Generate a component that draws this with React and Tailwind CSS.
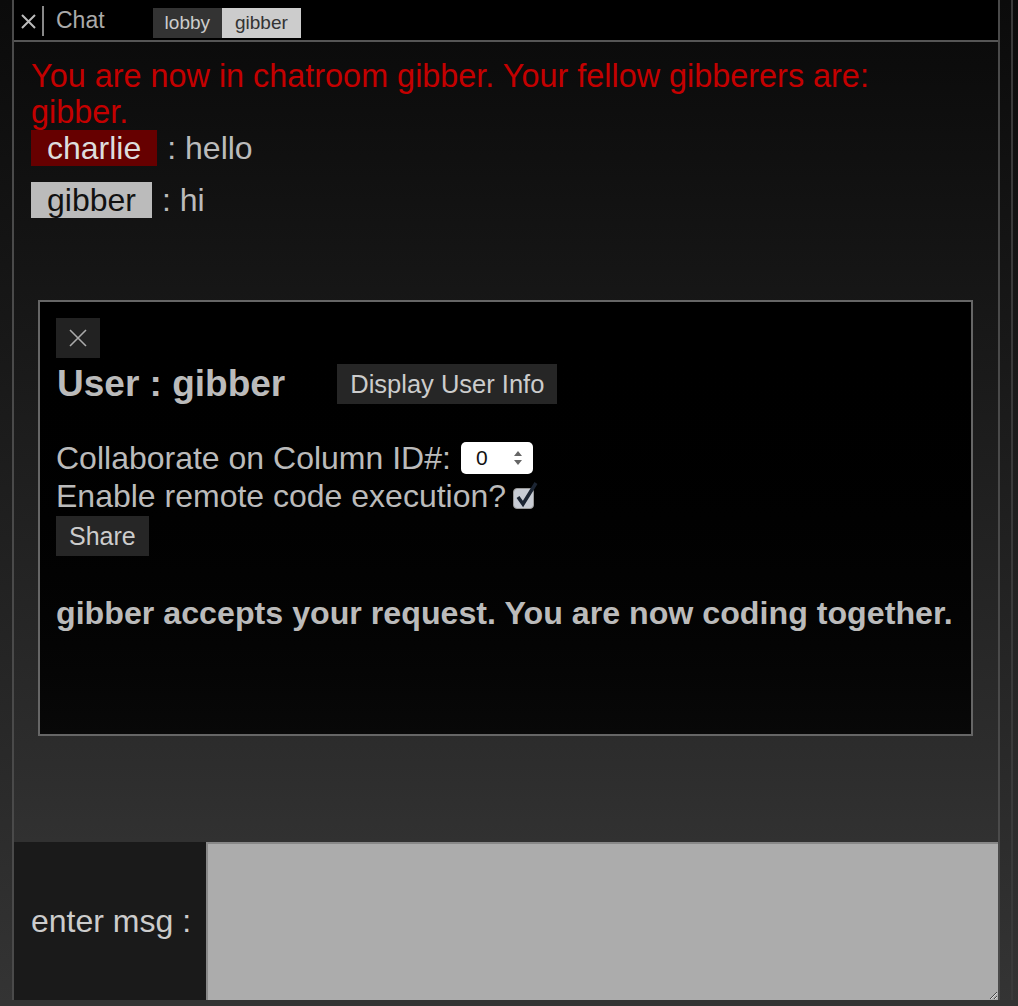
import React from 'react';

const App = () => {
  return (
    <div className="w-[1018px] h-[1006px] flex flex-col bg-gradient-to-b from-[#0b0b0b] to-[#343434] font-['Liberation_Sans',Arial,sans-serif] overflow-hidden">
      <div className="flex flex-1 min-h-0">
        {/* left strip */}
        <div className="w-[14px] border-r-2 border-[#4a4a4a]" />

        {/* main column */}
        <div className="w-[984px] flex flex-col">
          {/* header */}
          <div className="h-[42px] bg-black border-b-2 border-[#555] flex items-start pt-[6px]">
            <div className="w-[30px] h-[30px] flex items-center justify-center border-r-2 border-[#888]">
              <svg width="15" height="15" viewBox="0 0 15 15">
                <path d="M1 1 L14 14 M14 1 L1 14" stroke="#bbb" strokeWidth="2" />
              </svg>
            </div>
            <span className="ml-[12px] text-[23px] leading-[28px] text-[#aaa]">Chat</span>
            <div className="ml-[48px] mt-[2px] flex text-[19px] leading-[30px]">
              <span className="bg-[#333] text-[#ccc] px-[12px]">lobby</span>
              <span className="bg-[#ccc] text-[#333] px-[13px]">gibber</span>
            </div>
          </div>

          {/* chat body */}
          <div className="flex-1 flex flex-col px-[17px] pt-[16px] bg-gradient-to-b from-[#0b0b0b] to-[#313131]">
            <div className="text-[#c40000] text-[32.4px] leading-[36px] pr-[100px]">
              You are now in chatroom gibber. Your fellow gibberers are: gibber.
            </div>
            <div className="flex items-center text-[32px] leading-[36px]">
              <span className="bg-[#660000] text-[#ddd] px-[16px]">charlie</span>
              <span className="ml-[10px] text-[#bbb]">: hello</span>
            </div>
            <div className="flex items-center mt-[16px] text-[32px] leading-[36px]">
              <span className="bg-[#bbb] text-[#111] px-[16px]">gibber</span>
              <span className="ml-[10px] text-[#bbb]">: hi</span>
            </div>

            {/* user modal */}
            <div className="mt-[82px] ml-[7px] w-[935px] h-[436px] border-2 border-[#666] bg-gradient-to-b from-black to-[#080808] px-[16px] pt-[16px]">
              <button className="w-[44px] h-[40px] bg-[#222] flex items-center justify-center">
                <svg width="18" height="18" viewBox="0 0 18 18">
                  <path d="M1 1 L17 17 M17 1 L1 17" stroke="#aaa" strokeWidth="1.6" />
                </svg>
              </button>
              <div className="flex items-center mt-[6px]">
                <span className="text-[37px] leading-[40px] font-bold text-[#bbb] pl-[1px]">User : gibber</span>
                <span className="ml-[52px] h-[40px] px-[13px] bg-[#262626] text-[#ccc] text-[25.5px] leading-[40px]">Display User Info</span>
              </div>
              <div className="mt-[35px] flex items-center text-[32px] leading-[38px] text-[#bbb]">
                <span>Collaborate on Column ID#:</span>
                <div className="ml-[10px] w-[72px] h-[32px] bg-white rounded-[5px] flex items-center justify-between pl-[15px] pr-[10px]">
                  <span className="text-[21px] text-[#111]">0</span>
                  <svg width="10" height="16" viewBox="0 0 10 16">
                    <path d="M1 6 L5 1 L9 6 Z M1 10 L5 15 L9 10 Z" fill="#666" />
                  </svg>
                </div>
              </div>
              <div className="flex items-center text-[32px] leading-[38px] text-[#bbb]">
                <span>Enable remote code execution?</span>
                <div className="ml-[7px] mt-[4px] relative w-[21px] h-[21px] rounded-[4px] bg-[#c8ccd4] border border-[#999]">
                  <svg className="absolute -top-[10px] left-0" width="26" height="30" viewBox="0 0 26 30">
                    <path d="M4 18 L9 25 L22 4" stroke="#1c2533" strokeWidth="3.5" fill="none" />
                  </svg>
                </div>
              </div>
              <span className="inline-block mt-[1px] h-[40px] px-[13px] bg-[#262626] text-[#ccc] text-[25px] leading-[40px]">Share</span>
              <div className="mt-[38px] text-[32.2px] leading-[38px] font-bold text-[#bbb]">
                gibber accepts your request. You are now coding together.
              </div>
            </div>
          </div>

          {/* input row */}
          <div className="h-[158px] flex">
            <div className="w-[192px] bg-[#1a1a1a] flex items-center pl-[17px] text-[32px] text-[#ccc]">enter msg :</div>
            <textarea className="flex-1 bg-[#acacac] border-t-2 border-l-2 border-[#888] outline-none resize" />
          </div>
        </div>

        {/* right strip */}
        <div className="flex-1 border-l-2 border-[#4a4a4a] flex">
          <div className="w-[13px] border-r-2 border-[#3a3a3a]" />
        </div>
      </div>
      <div className="h-[6px] bg-[#333]" />
    </div>
  );
};

export default App;
